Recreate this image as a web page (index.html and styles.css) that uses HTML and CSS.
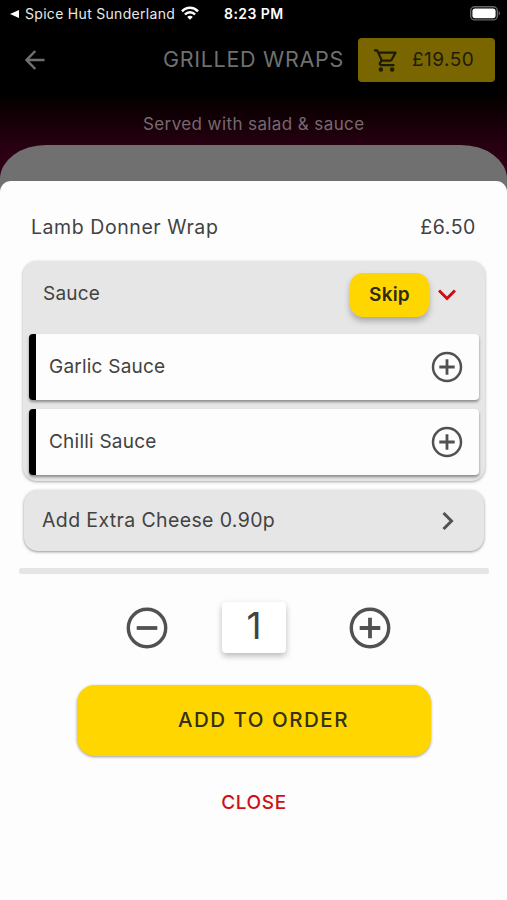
FILE: index.html
```html
<!DOCTYPE html>
<html lang="en">
<head>
<meta charset="utf-8">
<meta name="viewport" content="width=device-width, initial-scale=1">
<title>Grilled Wraps</title>
<link rel="stylesheet" href="styles.css">
</head>
<body>
<div class="screen">
  <div class="status">
    <svg class="back-app" viewBox="0 0 9 8"><path d="M0 4 9 0v8z" fill="#fff"/></svg>
    <span class="app-name">Spice Hut Sunderland</span>
    <svg class="wifi" viewBox="0 0 18 14" fill="none" stroke="#fff" stroke-width="2.5"><path d="M1 5.300C5.500.5 12.500.5 17 5.300M3.900 8.500c2.900-3 7.300-3 10.200 0"/><path d="M6.200 10.900c1.600-1.500 4-1.500 5.600 0L9 13.800z" fill="#fff" stroke="none"/></svg>
    <span class="time">8:23 PM</span>
    <svg class="battery" viewBox="0 0 31 15"><rect x=".7" y=".7" width="26.600" height="13.200" rx="4" fill="#000" stroke="#666" stroke-width="1.400"/><rect x="2.400" y="2.400" width="23.200" height="9.800" rx="2.600" fill="#fff"/><path d="M28.600 5c1.800.6 1.800 4 0 4.600z" fill="#666"/></svg>
  </div>
  <header class="header">
    <svg class="arrow" viewBox="0 0 20 20" fill="none" stroke="#707070" stroke-width="2.500"><path d="M19.500 10H1.800M10.300 1 1.500 10l8.800 9"/></svg>
    <h1 class="title">GRILLED WRAPS</h1>
    <div class="basket">
      <svg class="cart" viewBox="0 0 24 24" fill="#1d1b09"><path d="M15.550 13c.75 0 1.410-.41 1.750-1.030l3.580-6.490A1 1 0 0 0 20.010 4H5.210l-.94-2H1v2h2l3.600 7.590-1.350 2.440C4.520 15.370 5.480 17 7 17h12v-2H7l1.100-2h7.450zM6.160 6h12.150l-2.760 5H8.530L6.160 6zM7 18a2 2 0 1 0 0 4 2 2 0 0 0 0-4zm10 0a2 2 0 1 0 0 4 2 2 0 0 0 0-4z"/></svg>
      <span class="total">£19.50</span>
    </div>
  </header>
  <p class="subtitle">Served with salad &amp; sauce</p>
  <div class="backdrop">
    <main class="sheet">
      <div class="item"><span class="item-name">Lamb Donner Wrap</span><span class="item-price">£6.50</span></div>
      <section class="group">
        <div class="group-head">
          <span class="label">Sauce</span>
          <button class="skip">Skip</button>
          <svg class="chev-down" viewBox="0 0 18 12" fill="none" stroke="#d20a11" stroke-width="3"><path d="m1 1.500 8 8 8-8"/></svg>
        </div>
        <div class="option"><span class="label">Garlic Sauce</span><svg class="plus" viewBox="0 0 32 32" fill="none" stroke="#515151" stroke-width="2.500"><circle cx="16" cy="16" r="14"/><path d="M8.300 16h15.400M16 8.300v15.400" stroke-width="2.800"/></svg></div>
        <div class="option"><span class="label">Chilli Sauce</span><svg class="plus" viewBox="0 0 32 32" fill="none" stroke="#515151" stroke-width="2.500"><circle cx="16" cy="16" r="14"/><path d="M8.300 16h15.400M16 8.300v15.400" stroke-width="2.800"/></svg></div>
      </section>
      <section class="extra"><span class="label cheese">Add Extra Cheese 0.90p</span><svg class="chev-right" viewBox="0 0 12 18" fill="none" stroke="#515151" stroke-width="3"><path d="m1.500 1 8 8-8 8"/></svg></section>
      <div class="divider"></div>
      <div class="quantity">
        <svg class="step" viewBox="0 0 42 42" fill="none" stroke="#515151" stroke-width="3.400"><circle cx="21" cy="21" r="18.700"/><path d="M10.700 21h20.600" stroke-width="3.800"/></svg>
        <span class="count">1</span>
        <svg class="step" viewBox="0 0 42 42" fill="none" stroke="#515151" stroke-width="3.400"><circle cx="21" cy="21" r="18.700"/><path d="M10.700 21h20.600M21 10.700v20.600" stroke-width="3.800"/></svg>
      </div>
      <button class="add">ADD TO ORDER</button>
      <button class="close">CLOSE</button>
    </main>
  </div>
</div>
</body>
</html>
```
FILE: styles.css
```css
* { box-sizing: border-box; }
body { margin: 0; font-family: Inter, "Liberation Sans", sans-serif; }
svg { display: block; flex: none; }
button { border: 0; padding: 0; background: none; font-family: inherit; }

.screen {
  width: 507px; height: 900px; overflow: hidden;
  display: flex; flex-direction: column;
  background: linear-gradient(#000 92px, #0c0003 108px, #250010 142px, #39001a 180px);
}
.status {
  height: 28px; display: flex; align-items: center; color: #fff;
  padding-left: 10px; font-size: 14px;
}
.back-app { width: 9px; height: 8px; }
.app-name { width: 151px; margin-left: 6px; margin-top: -1px; white-space: nowrap; letter-spacing: .3px; color: #e8e8e8; }
.wifi { width: 18px; height: 14px; margin-left: 5px; margin-top: -2px; }
.time { margin-left: 25px; margin-top: -1px; font-weight: 600; letter-spacing: .45px; white-space: nowrap; }
.battery { width: 31px; height: 15px; margin-left: auto; margin-right: 6px; margin-top: -1px; }

.header { height: 64px; display: flex; align-items: center; padding: 0 12px 0 25px; }
.arrow { width: 20px; height: 20px; }
.title {
  margin: -3px 0 0 118px; width: 181px; white-space: nowrap;
  font-size: 21.500px; line-height: 28px; font-weight: 400; color: #707070; letter-spacing: .7px;
}
.basket {
  width: 137px; height: 44px; margin-left: auto; border-radius: 4px;
  background: #796600; display: flex; align-items: center; padding-left: 15px; color: #1d1b09;
}
.cart { width: 27px; height: 27px; }
.total { margin: -2px 0 0 12px; font-size: 19px; letter-spacing: .45px; }

.subtitle {
  margin: 0; height: 53px; padding-top: 20px; padding-left: 143px;
  font-size: 17px; line-height: 24px; color: #756a6e; white-space: nowrap; letter-spacing: .4px;
}
.backdrop {
  flex: 1; padding-top: 36px; background: #707070;
  border-radius: 46px 46px 0 0 / 34px 34px 0 0;
}
.sheet {
  height: 719px; background: #fdfdfd; border-radius: 11px 11px 0 0;
  padding: 31px 18px 0 19px; color: #424242;
}
.item {
  display: flex; justify-content: space-between; padding: 0 13px 0 12px;
  font-size: 19.500px; line-height: 30px;
}
.item-name, .item-price, .label { white-space: nowrap; }
.item-name { letter-spacing: .57px; }
.item-price { letter-spacing: .6px; }

.group {
  height: 220px; margin: 19px 4px 0; padding: 0 5px; border-radius: 14px;
  background: #e6e6e6; box-shadow: 0 1px 3px rgba(0,0,0,.35);
}
.group-head { height: 73px; display: flex; align-items: center; padding: 0 24px 6px 15px; }
.label { font-size: 19px; line-height: 24px; letter-spacing: .22px; margin-top: -1px; }
.cheese { font-size: 19.500px; letter-spacing: .37px; }
.skip {
  width: 79px; height: 44px; margin-left: auto; border-radius: 13px; background: #ffd600;
  color: #2f2b12; font-size: 19px; font-weight: 600; letter-spacing: .2px;
  box-shadow: 0 4px 6px rgba(0,0,0,.28);
}
.chev-down { width: 18px; height: 12px; margin-left: 9px; margin-top: 1px; }
.option {
  height: 66px; margin: 0 1px 9px; border-left: 7px solid #000; border-radius: 4px;
  background: #fdfdfd; box-shadow: 0 2px 3px rgba(0,0,0,.4);
  display: flex; align-items: center; justify-content: space-between; padding: 0 16px 0 13px;
}
.plus { width: 32px; height: 32px; }

.extra {
  height: 61px; margin: 9px 5px 0; padding: 0 30px 0 18px; border-radius: 14px;
  background: #e6e6e6; box-shadow: 0 1px 3px rgba(0,0,0,.42);
  display: flex; align-items: center; justify-content: space-between;
}
.chev-right { width: 12px; height: 18px; }
.divider { height: 6px; margin-top: 17px; border-radius: 2px; background: #e5e5e5; }

.quantity { height: 54px; margin-top: 27px; padding-left: 107px; display: flex; align-items: center; }
.step { width: 42px; height: 42px; }
.count {
  width: 64px; height: 51px; margin: -1px 63px 0 54px; border-radius: 4px; background: #fff;
  box-shadow: 0 3px 6px rgba(0,0,0,.27);
  font-size: 37px; line-height: 48px; text-align: center;
}
.add {
  display: block; width: 354px; height: 71px; margin: 30px 0 0 58px; padding: 0 0 3px 19px;
  border-radius: 18px; background: #ffd600; color: #36311a;
  font-size: 20.500px; font-weight: 500; letter-spacing: 1.500px; box-shadow: 0 1px 3px rgba(0,0,0,.38);
}
.close {
  display: block; height: 30px; margin: 32px auto 0; color: #cf1016;
  font-size: 19px; line-height: 30px; font-weight: 500; letter-spacing: .6px;
}
```
